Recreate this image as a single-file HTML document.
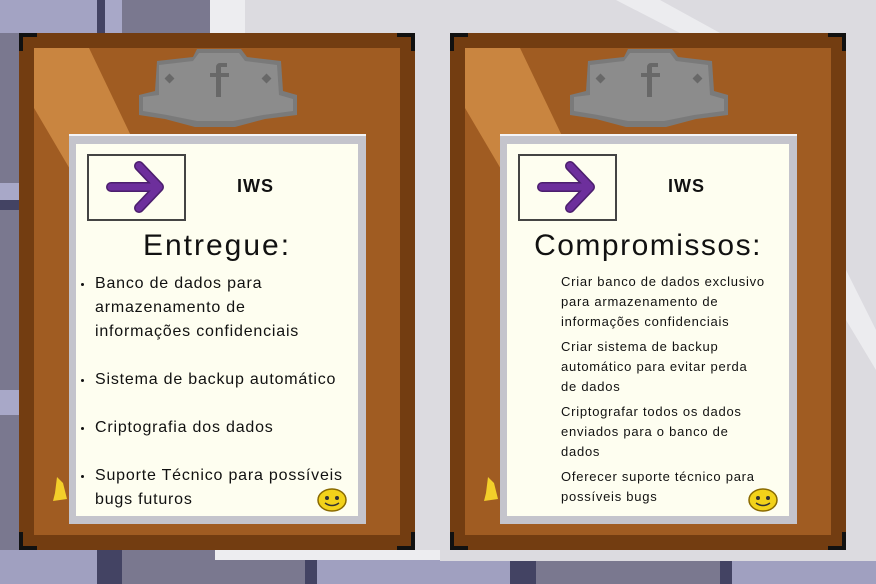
<!DOCTYPE html>
<html><head><meta charset="utf-8"><style>
*{margin:0;padding:0;box-sizing:border-box}
body{width:876px;height:584px;overflow:hidden;position:relative;background:#dcdbe0;font-family:"Liberation Sans",sans-serif;color:#111}
.a{position:absolute}
.board{position:absolute;top:33px;width:396px;height:517px;background:#733d11}
.face{position:absolute;left:15px;top:15px;width:366px;height:487px;background:#a05c22;overflow:hidden}
.paper{position:absolute;left:50px;top:101px;width:297px;height:390px;background:#c4c4cc;border-top:2px solid #f4f4f6}
.inner{position:absolute;left:7px;top:8px;width:282px;height:372px;background:#fefef0}
.corner{position:absolute;width:18px;height:18px;border-color:#111;border-style:solid}
.arrowbox{position:absolute;left:11px;top:10px;width:99px;height:67px;border:2px solid #444;background:#fefef0}
.iws{position:absolute;top:32px;font-size:18px;font-weight:bold;letter-spacing:1px}
h1{position:absolute;font-weight:normal;font-size:30px;left:0;width:282px;text-align:center;top:85px;letter-spacing:2px;white-space:nowrap}
ul{position:absolute;list-style:none;white-space:nowrap}
.l li{font-size:16px;line-height:24px;position:relative;letter-spacing:0.8px}
.l li:before{content:"";position:absolute;left:-14px;top:11px;width:3px;height:3px;border-radius:50%;background:#111}
.r li{font-size:13px;line-height:20px;margin-bottom:5px;letter-spacing:0.75px}
</style></head><body>
<div class="a" style="left:0;top:0;width:97px;height:33px;background:#a3a3c3"></div>
<div class="a" style="left:97px;top:0;width:8px;height:33px;background:#434363"></div>
<div class="a" style="left:105px;top:0;width:17px;height:33px;background:#a8a8c8"></div>
<div class="a" style="left:122px;top:0;width:88px;height:33px;background:#7a788f"></div>
<div class="a" style="left:210px;top:0;width:35px;height:33px;background:#ededf0"></div>
<div class="a" style="left:0;top:33px;width:19px;height:150px;background:#7a788f"></div>
<div class="a" style="left:0;top:183px;width:19px;height:25px;background:#a8a8c8"></div>
<div class="a" style="left:0;top:200px;width:19px;height:10px;background:#434363"></div>
<div class="a" style="left:0;top:210px;width:19px;height:340px;background:#7a788f"></div>
<div class="a" style="left:0;top:390px;width:19px;height:25px;background:#a8a8c8"></div>
<div class="a" style="left:0;top:550px;width:440px;height:34px;background:#a0a0c0"></div>
<div class="a" style="left:97px;top:550px;width:25px;height:34px;background:#434363"></div>
<div class="a" style="left:122px;top:550px;width:183px;height:34px;background:#7a788f"></div>
<div class="a" style="left:305px;top:550px;width:12px;height:34px;background:#434363"></div>
<div class="a" style="left:215px;top:550px;width:225px;height:10px;background:#ededf0"></div>
<div class="a" style="left:436px;top:561px;width:440px;height:23px;background:#a0a0c0"></div>
<div class="a" style="left:510px;top:561px;width:26px;height:23px;background:#434363"></div>
<div class="a" style="left:536px;top:561px;width:184px;height:23px;background:#7a788f"></div>
<div class="a" style="left:720px;top:561px;width:12px;height:23px;background:#434363"></div>
<svg class="a" style="left:0;top:0" width="876" height="584"><polygon points="616,0 660,0 720,33 680,33" fill="#ececef"/><polygon points="846,270 876,330 876,370 846,320" fill="#ececef"/></svg>

<div class="board" style="left:19px">
 <div class="face">
  <svg class="a" style="left:0;top:0" width="366" height="487"><polygon points="0,0 55,0 165,230 100,230 0,60" fill="#c98540"/></svg>
 </div>
 <div class="corner" style="left:0;top:0;border-width:4px 0 0 4px"></div>
 <div class="corner" style="right:0;top:0;border-width:4px 4px 0 0"></div>
 <div class="corner" style="left:0;bottom:0;border-width:0 0 4px 4px"></div>
 <div class="corner" style="right:0;bottom:0;border-width:0 4px 4px 0"></div>
 <svg class="a" style="left:116px;top:14px" width="166" height="82" viewBox="0 0 166 82"><path d="M4,48 L20,44 L22,14 L58,10 L62,2 L106,2 L112,10 L146,14 L148,44 L162,48 L162,68 L130,72 L100,80 L60,80 L30,72 L4,68Z" fill="#7a7a7a"/><path d="M8,50 L24,48 L24,18 L58,14 L64,6 L104,6 L110,14 L142,18 L144,48 L158,52 L158,64 L128,68 L98,74 L62,74 L32,68 L8,64Z" fill="#8c8c8c"/><path d="M80,16 h12 v4 h-6 v6 h8 v4 h-8 v20 h-5 v-20 h-6 v-4 h6 v-6 a4,4 0 0 1 4,-4z" fill="#686868"/><rect x="31" y="28" width="7" height="7" transform="rotate(45 34.5 31.5)" fill="#686868"/><rect x="128" y="28" width="7" height="7" transform="rotate(45 131.5 31.5)" fill="#686868"/></svg>
 <svg class="a" style="left:32px;top:440px" width="20" height="30"><path d="M6,4 L12,10 L16,26 L2,28 L4,20Z" fill="#f3cf2a"/></svg>
 <div class="paper"><div class="inner">
  <div class="arrowbox"><svg width="95" height="63"><path d="M22,31 H62 M50,10 L70,31 L50,52" stroke="#4c1f6e" stroke-width="10" fill="none" stroke-linecap="round" stroke-linejoin="round"/><path d="M22,31 H62 M50,10 L70,31 L50,52" stroke="#6d2f9c" stroke-width="7" fill="none" stroke-linecap="round" stroke-linejoin="round"/></svg></div>
  <div class="iws" style="left:161px">IWS</div>
  <h1>Entregue:</h1>
  <ul class="l" style="left:19px;top:128px;width:265px">
   <li>Banco de dados para<br>armazenamento de<br>informações confidenciais</li>
   <li style="margin-top:24px">Sistema de backup automático</li>
   <li style="margin-top:24px">Criptografia dos dados</li>
   <li style="margin-top:24px">Suporte Técnico para possíveis<br>bugs futuros</li>
  </ul>
  <svg class="a" style="left:241px;top:344px" width="32" height="24"><ellipse cx="15" cy="12" rx="14" ry="11" fill="#f2d21a" stroke="#8a6a00" stroke-width="1.5"/><circle cx="10" cy="10" r="2" fill="#333"/><circle cx="20" cy="10" r="2" fill="#333"/><path d="M8,15 Q15,20 22,15" stroke="#333" stroke-width="1.5" fill="none"/></svg>
 </div></div>
</div>

<div class="board" style="left:450px">
 <div class="face">
  <svg class="a" style="left:0;top:0" width="366" height="487"><polygon points="0,0 55,0 165,230 100,230 0,60" fill="#c98540"/></svg>
 </div>
 <div class="corner" style="left:0;top:0;border-width:4px 0 0 4px"></div>
 <div class="corner" style="right:0;top:0;border-width:4px 4px 0 0"></div>
 <div class="corner" style="left:0;bottom:0;border-width:0 0 4px 4px"></div>
 <div class="corner" style="right:0;bottom:0;border-width:0 4px 4px 0"></div>
 <svg class="a" style="left:116px;top:14px" width="166" height="82" viewBox="0 0 166 82"><path d="M4,48 L20,44 L22,14 L58,10 L62,2 L106,2 L112,10 L146,14 L148,44 L162,48 L162,68 L130,72 L100,80 L60,80 L30,72 L4,68Z" fill="#7a7a7a"/><path d="M8,50 L24,48 L24,18 L58,14 L64,6 L104,6 L110,14 L142,18 L144,48 L158,52 L158,64 L128,68 L98,74 L62,74 L32,68 L8,64Z" fill="#8c8c8c"/><path d="M80,16 h12 v4 h-6 v6 h8 v4 h-8 v20 h-5 v-20 h-6 v-4 h6 v-6 a4,4 0 0 1 4,-4z" fill="#686868"/><rect x="31" y="28" width="7" height="7" transform="rotate(45 34.5 31.5)" fill="#686868"/><rect x="128" y="28" width="7" height="7" transform="rotate(45 131.5 31.5)" fill="#686868"/></svg>
 <svg class="a" style="left:32px;top:440px" width="20" height="30"><path d="M6,4 L12,10 L16,26 L2,28 L4,20Z" fill="#f3cf2a"/></svg>
 <div class="paper"><div class="inner">
  <div class="arrowbox"><svg width="95" height="63"><path d="M22,31 H62 M50,10 L70,31 L50,52" stroke="#4c1f6e" stroke-width="10" fill="none" stroke-linecap="round" stroke-linejoin="round"/><path d="M22,31 H62 M50,10 L70,31 L50,52" stroke="#6d2f9c" stroke-width="7" fill="none" stroke-linecap="round" stroke-linejoin="round"/></svg></div>
  <div class="iws" style="left:161px">IWS</div>
  <h1 style="font-size:30px;letter-spacing:1.5px">Compromissos:</h1>
  <ul class="r" style="left:54px;top:128px;width:230px">
   <li>Criar banco de dados exclusivo<br>para armazenamento de<br>informações confidenciais</li>
   <li>Criar sistema de backup<br>automático para evitar perda<br>de dados</li>
   <li>Criptografar todos os dados<br>enviados para o banco de<br>dados</li>
   <li>Oferecer suporte técnico para<br>possíveis bugs</li>
  </ul>
  <svg class="a" style="left:241px;top:344px" width="32" height="24"><ellipse cx="15" cy="12" rx="14" ry="11" fill="#f2d21a" stroke="#8a6a00" stroke-width="1.5"/><circle cx="10" cy="10" r="2" fill="#333"/><circle cx="20" cy="10" r="2" fill="#333"/><path d="M8,15 Q15,20 22,15" stroke="#333" stroke-width="1.5" fill="none"/></svg>
 </div></div>
</div>
</body></html>
